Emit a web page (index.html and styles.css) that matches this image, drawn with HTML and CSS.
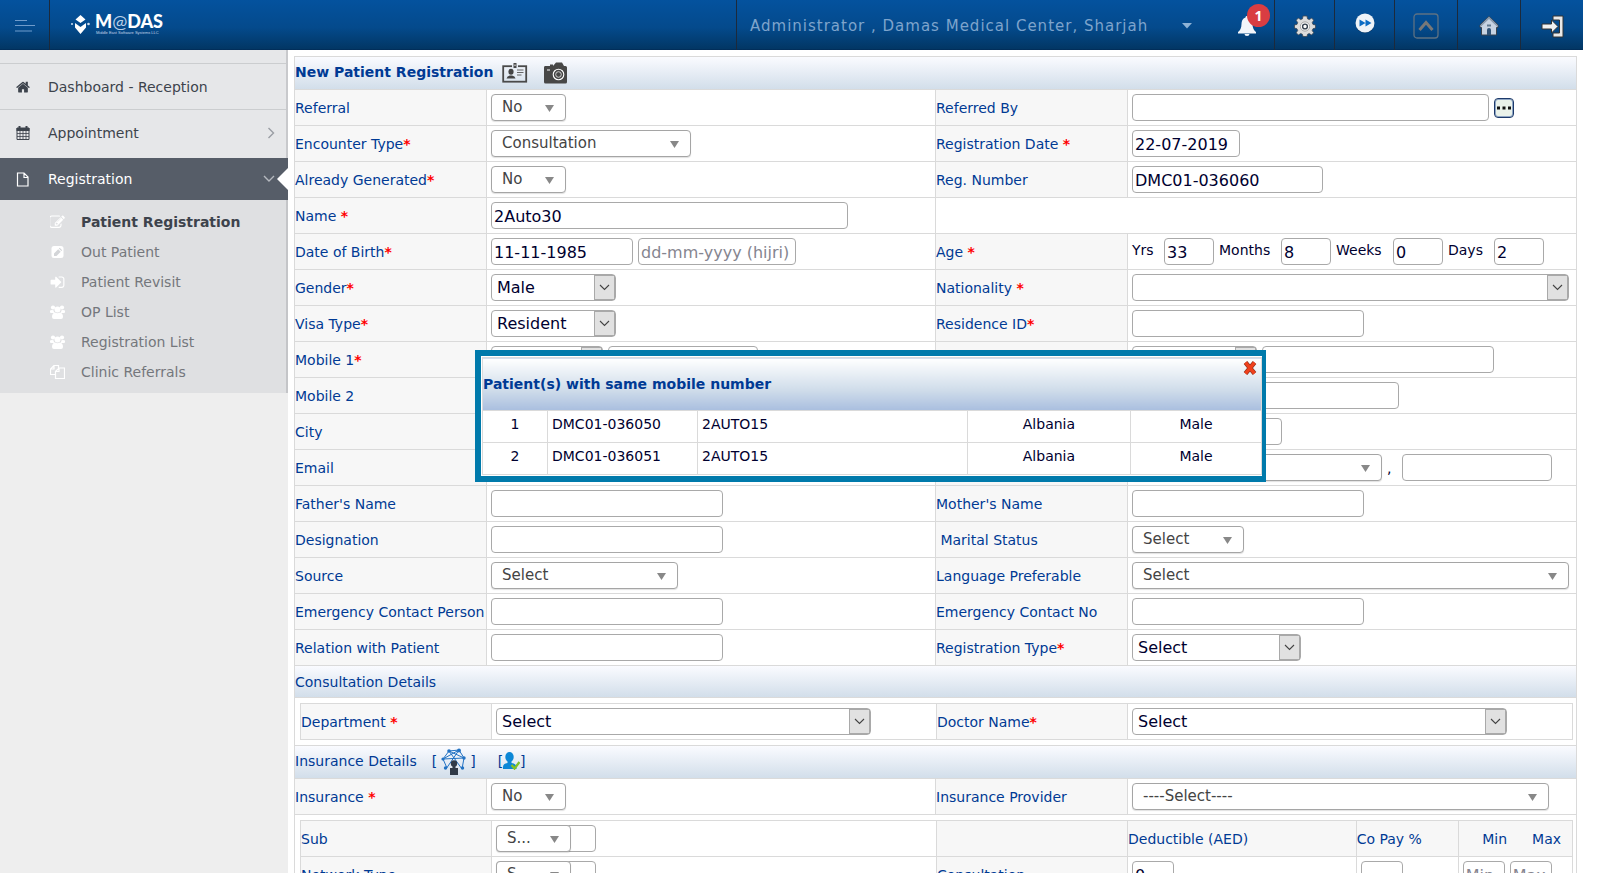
FILE: index.html
```html
<!DOCTYPE html>
<html lang="en">
<head>
<meta charset="utf-8">
<title>New Patient Registration</title>
<link rel="stylesheet" href="styles.css">
</head>
<body>
<div class="page">
  <header class="topbar">
    <button class="menu-toggle" type="button" aria-label="Toggle menu">
      <svg width="20" height="12" viewBox="0 0 20 12"><path d="M0 .5h12M0 5.500h20M0 11h17" stroke="#6f9bcb" stroke-width="1.200"/></svg>
    </button>
    <a class="brand" href="#">
      <svg width="100" height="36" viewBox="0 -6 100 36">
        <path d="M9.500 1l5 4.500-5 3.500-5-3.500z M4 9l5.500 4L15 9v4.500L9.500 20 4 13.500z" fill="#fff"/>
        <circle cx="1" cy="10" r="1" fill="#cfe0f2"/><circle cx="17.500" cy="10" r="1.300" fill="#cfe0f2"/>
        <text class="brand-name" x="24" y="14">M<tspan class="brand-e">@</tspan>DAS</text>
        <text class="brand-sub" x="25" y="20">Middle East Software Systems LLC</text>
      </svg>
    </a>
    <div class="user-area">
      <button class="user-button" type="button">Administrator , Damas Medical Center, Sharjah
        <svg width="10" height="6" viewBox="0 0 10 6"><path d="M0 0h10L5 5.500z" fill="#8fb3d6"/></svg>
      </button>
      <button class="bell" type="button" aria-label="Notifications">
        <svg width="18" height="20" viewBox="0 0 18 20"><path d="M9 0c1 0 1.500.6 1.500 1.400C13.500 2.200 14.500 5 14.500 8c0 4 1.500 6.500 3.500 8v1.500H0V16c2-1.500 3.500-4 3.500-8 0-3 1-5.800 4-6.600C7.500.6 8 0 9 0zM6.500 18h5a2.500 2 0 0 1-5 0z" fill="#f2f5fa"/></svg>
        <span class="badge">1</span>
      </button>
    </div>
    <nav class="tools">
      <a class="tool" href="#" aria-label="Settings">
        <svg width="22" height="22" viewBox="0 0 22 22"><g fill="#dcdcdc" stroke="#3c4652" stroke-width=".8"><path d="M9 1h4l.5 2.800 1.800.8L17.700 3l2 2.300-1.500 2.400.8 1.800 2.500.4v3.200l-2.500.6-.8 1.800 1.500 2.300-2.200 2.200-2.300-1.500-1.700.8L13 21.500H9l-.6-2.200-1.700-.8L4.400 20l-2.200-2.200 1.500-2.300-.8-1.800-2.400-.6V9.900l2.400-.4.800-1.800L2.200 5.300 4.300 3l2.400 1.600 1.800-.8z"/></g><circle cx="11" cy="11.500" r="4.600" fill="#fff" stroke="#a5a5a5"/><circle cx="11" cy="11.500" r="2.400" fill="#fff" stroke="#35404d" stroke-width="1.400"/></svg>
      </a>
      <a class="tool tool-raised" href="#" aria-label="Quick links">
        <svg width="20" height="20" viewBox="0 0 20 20"><circle cx="10" cy="10.500" r="9.500" fill="#022a55"/><circle cx="10" cy="10" r="9.500" fill="#eef3f8"/><path d="M4.500 6.500l6 3.500-6 3.500zM10.500 6.500l6 3.500-6 3.500z" fill="#0c6cc4"/></svg>
      </a>
      <a class="tool" href="#" aria-label="Collapse">
        <svg width="26" height="26" viewBox="0 0 26 26"><rect x="1" y="1" width="24" height="24" rx="3" fill="none" stroke="#5d7183" stroke-width="1.300"/><path d="M6.500 17L13 9.500l6.500 7.500" fill="none" stroke="#787878" stroke-width="3"/></svg>
      </a>
      <a class="tool" href="#" aria-label="Home">
        <svg width="20" height="20" viewBox="0 0 20 20"><path d="M10 .5l9 8.500v2.500h-1.500V19h-15v-7.500H1V9z" fill="#c7d3e2" stroke="#38424e" stroke-width="1"/><path d="M1.500 10L10 2l8.500 8" fill="none" stroke="#8798ab" stroke-width="1.500"/><path d="M8 19v-5a2 2 0 0 1 4 0v5z" fill="#2f5276"/><path d="M8 8.500h4v2H8z" fill="#60788f"/></svg>
      </a>
      <a class="tool" href="#" aria-label="Log out">
        <svg width="23" height="23" viewBox="0 0 23 23"><path d="M12 1h10v21H12v-4h6.500V5H12z" fill="#e9e9e9" stroke="#333" stroke-width="1"/><path d="M1 9h9.500V5l6.500 6.500-6.500 6.500v-4H1z" fill="#f1f1f1" stroke="#333" stroke-width="1"/></svg>
      </a>
    </nav>
  </header>

  <div class="body">
    <aside class="sidebar">
      <nav class="side-nav">
        <a class="side-item" href="#">
          <svg class="side-icon" width="14" height="14" viewBox="64 180 1664 1408"><path fill="#3d434c" d="M1472 992v480q0 26-19 45t-45 19h-384v-384h-256v384h-384q-26 0-45-19t-19-45v-480q0-1 .5-3t.5-3l575-474 575 474q1 2 1 6zm223-69l-62 74q-8 9-21 11h-3q-13 0-21-7l-692-577-692 577q-12 8-24 7-13-2-21-11l-62-74q-8-10-7-23.500t11-21.500l719-599q32-26 76-26t76 26l244 204v-195q0-14 9-23t23-9h192q14 0 23 9t9 23v408l219 182q10 8 11 21.500t-7 23.500z"/></svg>
          <span>Dashboard - Reception</span>
        </a>
        <a class="side-item" href="#">
          <svg class="side-icon" width="14" height="14" viewBox="0 0 14 14"><path d="M1 2h12v11.500H1z" fill="none" stroke="#3d434c"/><path d="M.5 2h13v3H.5z" fill="#3d434c"/><path d="M3.500 0v3.500M10.500 0v3.500" stroke="#3d434c" stroke-width="2"/><path d="M1 7.500h12M1 10.500h12M4 5v8.500M7 5v8.500M10 5v8.500" stroke="#3d434c" stroke-width=".8"/></svg>
          <span>Appointment</span>
          <svg class="side-arrow" width="8" height="12" viewBox="0 0 8 12"><path d="M1.500 1l5 5-5 5" fill="none" stroke="#9a9ea4" stroke-width="1.400"/></svg>
        </a>
        <a class="side-item side-item-active" href="#">
          <svg class="side-icon" width="14" height="15" viewBox="0 0 14 15"><path d="M1.500 1h6.500l4 4v9h-10.500zM8 1v4.500h4" fill="none" stroke="#fff" stroke-width="1.200"/></svg>
          <span>Registration</span>
          <svg class="side-arrow" width="12" height="8" viewBox="0 0 12 8"><path d="M1 1l5 5 5-5" fill="none" stroke="#b5b9bf" stroke-width="1.400"/></svg>
        </a>
      </nav>
      <nav class="sub-nav">
        <a class="sub-item sub-item-current" href="#">
          <svg width="15" height="14" viewBox="100 128 1700 1480"><path fill="#fff" d="M888 1184l116-116-152-152-116 116v56h96v96h56zm440-720q-16-16-33 1l-350 350q-17 17-1 33t33-1l350-350q17-17 1-33zm80 594v190q0 119-84.500 203.500t-203.500 84.500h-832q-119 0-203.500-84.500t-84.500-203.500v-832q0-119 84.500-203.500t203.500-84.500h832q63 0 117 25 15 7 18 23 3 17-9 29l-49 49q-14 14-32 8-23-6-45-6h-832q-66 0-113 47t-47 113v832q0 66 47 113t113 47h832q66 0 113-47t47-113v-126q0-13 9-22l64-64q15-15 35-7t20 29zm-96-738l288 288-672 672h-288v-288zm444 132l-92 92-288-288 92-92q28-28 68-28t68 28l152 152q28 28 28 68t-28 68z"/></svg>
          <span>Patient Registration</span></a>
        <a class="sub-item" href="#">
          <svg width="15" height="14" viewBox="0 0 15 14"><rect x="1.500" y="1" width="12" height="12" rx="2.500" fill="#fff"/><path d="M4 11V8.500L8.200 4.300l2.500 2.500L6.500 11zM8.900 3.600l.8-.8 2.500 2.500-.8.8z" fill="#d3d5d8"/></svg>
          <span>Out Patient</span></a>
        <a class="sub-item" href="#">
          <svg width="15" height="14" viewBox="64 160 1664 1440"><path fill="#fff" d="M1312 896q0 26-19 45l-544 544q-19 19-45 19t-45-19-19-45v-288h-448q-26 0-45-19t-19-45v-384q0-26 19-45t45-19h448v-288q0-26 19-45t45-19 45 19l544 544q19 19 19 45zm352-352v704q0 119-84.500 203.500t-203.500 84.500h-320q-13 0-22.500-9.500t-9.500-22.500q0-4-1-20t-.5-26.500 3-23.500 10-19.500 20.500-6.500h320q66 0 113-47t47-113v-704q0-66-47-113t-113-47h-312l-11.500-1-11.500-3-8-5.500-7-9-2-13.500q0-4-1-20t-.5-26.500 3-23.500 10-19.500 20.500-6.500h320q119 0 203.500 84.500t84.500 203.500z"/></svg>
          <span>Patient Revisit</span></a>
        <a class="sub-item" href="#">
          <svg width="15" height="14" viewBox="0 0 15 14"><g fill="#fff"><circle cx="3" cy="2.500" r="2.100"/><circle cx="12" cy="2.500" r="2.100"/><circle cx="7.500" cy="4.500" r="3"/><path d="M0 5.500q1.500-1 3.500-.3Q3.500 7 5 8H1Q0 8 0 7zM15 5.500q-1.500-1-3.500-.3Q11.500 7 10 8h4q1 0 1-1zM2 12q0-4 3-4.500 2.500 1.500 5 0 3 .5 3 4.500 0 2-2 2H4q-2 0-2-2z"/></g></svg>
          <span>OP List</span></a>
        <a class="sub-item" href="#">
          <svg width="15" height="14" viewBox="0 0 15 14"><g fill="#fff"><circle cx="3" cy="2.500" r="2.100"/><circle cx="12" cy="2.500" r="2.100"/><circle cx="7.500" cy="4.500" r="3"/><path d="M0 5.500q1.500-1 3.500-.3Q3.500 7 5 8H1Q0 8 0 7zM15 5.500q-1.500-1-3.500-.3Q11.500 7 10 8h4q1 0 1-1zM2 12q0-4 3-4.500 2.500 1.500 5 0 3 .5 3 4.500 0 2-2 2H4q-2 0-2-2z"/></g></svg>
          <span>Registration List</span></a>
        <a class="sub-item" href="#">
          <svg width="15" height="14" viewBox="0 0 15 14"><path d="M5.500 9.500h-5V4L4 .5h4.500V3M4 .5V4H.5M5.500 6.500L9 3h5.500v10.500h-9zM9 3v3.500H5.500" fill="none" stroke="#fff" stroke-width="1.200"/></svg>
          <span>Clinic Referrals</span></a>
      </nav>
    </aside>

    <main class="main">
      <form class="form">
        <div class="band">
          <h1 class="title">New Patient Registration</h1>
          <button class="icon-button" type="button" aria-label="Scan ID card">
            <svg width="26" height="20" viewBox="0 0 26 20"><rect x="1.200" y="3.200" width="23" height="15.500" fill="none" stroke="#4a4a4a" stroke-width="1.800"/><path d="M10 2h6v4h-6z" fill="#e3e9f1"/><path d="M11.500 0h3v5h-3z" fill="#4a4a4a"/><path d="M12.500 1.500h1v1.500h-1z" fill="#fff"/><ellipse cx="9" cy="8.800" rx="2.600" ry="3" fill="#444"/><path d="M4.500 15.500q.5-2.500 3.500-3h2q3 .5 3.500 3z" fill="#444"/><path d="M15 7h6.500M15 9.500h6.500M15 12h4.500" stroke="#666" stroke-width="1.100"/></svg>
          </button>
          <button class="icon-button icon-camera" type="button" aria-label="Take photo">
            <svg width="24" height="22" viewBox="0 0 24 22"><path d="M2 4h5V2.500h3V4l3-3.500h6L21 4h1.500q1.500 0 1.500 1.500V20q0 1.500-1.500 1.500h-20Q1 21.500 1 20V5.500Q1 4 2 4z" fill="#474747"/><circle cx="15.500" cy="12.500" r="5.300" fill="none" stroke="#fff" stroke-width="1.100"/><circle cx="15.500" cy="12.500" r="2.800" fill="none" stroke="#ddd" stroke-width=".9"/><path d="M4 8h3" stroke="#fff"/></svg>
          </button>
        </div>

        <div class="rows">
          <div class="lab"><label for="referral">Referral</label></div>
          <div class="val"><select id="referral" class="drop w75"><option>No</option></select></div>
          <div class="lab"><label for="refby">Referred By</label></div>
          <div class="val"><input id="refby" class="box w357"><button class="dots" type="button" aria-label="Browse"><svg width="14" height="4" viewBox="0 0 14 4"><path d="M0 .5h3v3H0zM5.500.5h3v3h-3zM11 .5h3v3h-3z" fill="#111"/></svg></button></div>

          <div class="lab"><label for="enc">Encounter Type<b class="req">*</b></label></div>
          <div class="val"><select id="enc" class="drop w200"><option>Consultation</option></select></div>
          <div class="lab"><label for="regdate">Registration Date <b class="req">*</b></label></div>
          <div class="val"><input id="regdate" class="box w108" value="22-07-2019"></div>

          <div class="lab"><label for="already">Already Generated<b class="req">*</b></label></div>
          <div class="val"><select id="already" class="drop w75"><option>No</option></select></div>
          <div class="lab"><label for="regno">Reg. Number</label></div>
          <div class="val"><input id="regno" class="box w191" value="DMC01-036060"></div>

          <div class="lab"><label for="name">Name <b class="req">*</b></label></div>
          <div class="val"><input id="name" class="box w357" value="2Auto30"></div>
          <div class="val wide"></div>

          <div class="lab"><label for="dob">Date of Birth<b class="req">*</b></label></div>
          <div class="val"><input id="dob" class="box w142" value="11-11-1985"><input class="box w158" placeholder="dd-mm-yyyy (hijri)" aria-label="Date of birth (hijri)"></div>
          <div class="lab"><span>Age <b class="req">*</b></span></div>
          <div class="val age">
            <label class="age-part age-y"><span>Yrs</span><input class="box w50" value="33"></label>
            <label class="age-part age-m"><span>Months</span><input class="box w50" value="8"></label>
            <label class="age-part age-w"><span>Weeks</span><input class="box w50" value="0"></label>
            <label class="age-part age-d"><span>Days</span><input class="box w50" value="2"></label>
          </div>

          <div class="lab"><label for="gender">Gender<b class="req">*</b></label></div>
          <div class="val"><select id="gender" class="pick w125"><option>Male</option></select></div>
          <div class="lab"><label for="nation">Nationality <b class="req">*</b></label></div>
          <div class="val"><select id="nation" class="pick w437"><option></option></select></div>

          <div class="lab"><label for="visa">Visa Type<b class="req">*</b></label></div>
          <div class="val"><select id="visa" class="pick w125"><option>Resident</option></select></div>
          <div class="lab"><label for="resid">Residence ID<b class="req">*</b></label></div>
          <div class="val"><input id="resid" class="box w232"></div>

          <div class="lab"><label for="mob1">Mobile 1<b class="req">*</b></label></div>
          <div class="val"><select class="pick w112" aria-label="Mobile 1 code"><option></option></select><input id="mob1" class="box w150"></div>
          <div class="lab"></div>
          <div class="val"><select class="pick w125" aria-label="ID type"><option></option></select><input class="box w232" aria-label="ID number"></div>

          <div class="lab"><label for="mob2">Mobile 2</label></div>
          <div class="val"><input id="mob2" class="box w232"></div>
          <div class="lab"></div>
          <div class="val"><select class="pick w112" aria-label="Phone code"><option></option></select><input class="box w150" aria-label="Phone"></div>

          <div class="lab"><label for="city">City</label></div>
          <div class="val"><input id="city" class="box w232"></div>
          <div class="lab"></div>
          <div class="val"><input class="box w150" aria-label="P.O. Box"></div>

          <div class="lab"><label for="email">Email</label></div>
          <div class="val"><input id="email" class="box w232"></div>
          <div class="lab"></div>
          <div class="val"><select class="drop w250" aria-label="Religion"><option></option></select><span class="comma">,</span><input class="box w150" aria-label="Other"></div>

          <div class="lab"><label for="father">Father's Name</label></div>
          <div class="val"><input id="father" class="box w232"></div>
          <div class="lab"><label for="mother">Mother's Name</label></div>
          <div class="val"><input id="mother" class="box w232"></div>

          <div class="lab"><label for="desig">Designation</label></div>
          <div class="val"><input id="desig" class="box w232"></div>
          <div class="lab"><label for="marital">&nbsp;Marital Status</label></div>
          <div class="val"><select id="marital" class="drop w112"><option>Select</option></select></div>

          <div class="lab"><label for="source">Source</label></div>
          <div class="val"><select id="source" class="drop w187"><option>Select</option></select></div>
          <div class="lab"><label for="lang">Language Preferable</label></div>
          <div class="val"><select id="lang" class="drop w437"><option>Select</option></select></div>

          <div class="lab"><label for="ecp">Emergency Contact Person</label></div>
          <div class="val"><input id="ecp" class="box w232"></div>
          <div class="lab"><label for="ecn">Emergency Contact No</label></div>
          <div class="val"><input id="ecn" class="box w232"></div>

          <div class="lab"><label for="rel">Relation with Patient</label></div>
          <div class="val"><input id="rel" class="box w232"></div>
          <div class="lab"><label for="regtype">Registration Type<b class="req">*</b></label></div>
          <div class="val"><select id="regtype" class="pick w169"><option>Select</option></select></div>
        </div>

        <div class="band band-short"><h2 class="section">Consultation Details</h2></div>
        <div class="nested">
          <div class="rows rows-nested">
            <div class="lab"><label for="dept">Department <b class="req">*</b></label></div>
            <div class="val"><select id="dept" class="pick w375"><option>Select</option></select></div>
            <div class="lab"><label for="doctor">Doctor Name<b class="req">*</b></label></div>
            <div class="val"><select id="doctor" class="pick w375"><option>Select</option></select></div>
          </div>
        </div>

        <div class="band band-insurance"><h2 class="section">Insurance Details</h2>
          <span class="bracket bracket-net">[
            <button class="icon-button" type="button" aria-label="Insurance network">
              <svg width="25" height="27" viewBox="0 0 25 27"><path d="M2 11L8 3l10-1 5 8-2 11M2 11l21-1M8 3l15 7M18 2L2 11l4 9M8 3l13 18M18 2L5 21" fill="none" stroke="#2272c3" stroke-width="1"/><g fill="#2272c3"><circle cx="2" cy="11" r="1.600"/><circle cx="8" cy="3" r="1.800"/><circle cx="18" cy="2.500" r="1.900"/><circle cx="23" cy="10" r="1.700"/><circle cx="21.500" cy="20" r="1.700"/><circle cx="4.500" cy="20" r="1.700"/></g><circle cx="13" cy="15.500" r="3.200" fill="#303a48"/><path d="M11.500 17h3v3h2.500v7H9v-7h2.500z" fill="#303a48"/></svg>
            </button>
            ]</span>
          <span class="bracket">[<button class="icon-button" type="button" aria-label="Verify member">
              <svg width="17" height="18" viewBox="0 0 17 18"><ellipse cx="6.500" cy="5" rx="4.200" ry="5" fill="#0b87d6"/><path d="M4.500 8h4v3q5 .5 5 4.500V17H0v-2q0-3.500 4.500-4z" fill="#0b87d6"/><path d="M8.500 13l3 3.500 5-6.500" fill="none" stroke="#84c225" stroke-width="2.400"/></svg>
            </button>]</span>
        </div>
        <div class="rows">
          <div class="lab"><label for="ins">Insurance <b class="req">*</b></label></div>
          <div class="val"><select id="ins" class="drop w75"><option>No</option></select></div>
          <div class="lab"><label for="prov">Insurance Provider</label></div>
          <div class="val"><select id="prov" class="drop w417"><option>----Select----</option></select></div>
        </div>
        <div class="nested">
          <div class="rows rows-nested rows-cover">
            <div class="lab"><label for="sub">Sub</label></div>
            <div class="val"><span class="combo"><select id="sub" class="drop w75"><option>S...</option></select></span></div>
            <div class="lab"></div>
            <div class="lab">Deductible (AED)</div>
            <div class="lab">Co Pay %</div>
            <div class="lab minmax"><span>Min</span><span>Max</span></div>

            <div class="lab"><label for="net">Network Type</label></div>
            <div class="val"><span class="combo"><select id="net" class="drop w75"><option>S...</option></select></span></div>
            <div class="lab"><label for="ded">Consultation</label></div>
            <div class="val"><input id="ded" class="box w42" value="0"></div>
            <div class="val"><input class="box w42" aria-label="Co pay"></div>
            <div class="val"><input class="box w42" placeholder="Min" aria-label="Min"><input class="box w42" placeholder="Max" aria-label="Max"></div>
          </div>
        </div>
      </form>

      <div class="popup" role="dialog" aria-label="Patient(s) with same mobile number">
        <button class="popup-close" type="button" aria-label="Close"><svg width="14" height="14" viewBox="0 0 14 14"><path d="M2.500 1.500l9 11M11.500 1.500l-9 11" stroke="#8d3420" stroke-width="4.600"/><path d="M2.500 1.500l9 11M11.500 1.500l-9 11" stroke="#f0401c" stroke-width="3.400"/></svg></button>
        <table class="matches">
          <colgroup><col class="c-no"><col class="c-id"><col><col class="c-nation"><col class="c-sex"></colgroup>
          <thead><tr><th colspan="5">Patient(s) with same mobile number</th></tr></thead>
          <tbody>
            <tr><td class="mid">1</td><td>DMC01-036050</td><td>2AUTO15</td><td class="mid">Albania</td><td class="mid">Male</td></tr>
            <tr><td class="mid">2</td><td>DMC01-036051</td><td>2AUTO15</td><td class="mid">Albania</td><td class="mid">Male</td></tr>
          </tbody>
        </table>
      </div>
    </main>
  </div>
</div>
</body>
</html>
```
FILE: styles.css
```css
* { box-sizing: border-box; }

body {
  margin: 0;
  background: #fff;
  color: #00002f;
  font: 14px/18px Verdana, "DejaVu Sans", sans-serif;
}

button {
  padding: 0;
  border: 0;
  background: none;
  color: inherit;
  font: inherit;
}

a { color: inherit; text-decoration: none; }
svg { display: block; flex: none; }

.page {
  display: flex;
  flex-direction: column;
  height: 100vh;
  padding-right: 20px;
  overflow: hidden;
}

/* Top bar */
.topbar {
  display: flex;
  flex: none;
  height: 50px;
  background: linear-gradient(#04529e, #044a8c 55%, #023765 97%, #012a55);
}

.menu-toggle {
  display: flex;
  align-items: center;
  width: 50px;
  padding: 2px 0 0 15px;
  border-right: 1px solid #1c2a3c;
}

.brand { display: flex; align-items: center; padding: 2px 0 0 21px; }
.brand-name { fill: #fff; font: 900 18px Lato, sans-serif; }
.brand-e { fill: #b9cfe6; font-weight: 400; }
.brand-sub { fill: #c3d5e8; font: 4px "Liberation Sans", sans-serif; }

.user-area {
  display: flex;
  justify-content: space-between;
  align-items: center;
  width: 538px;
  margin-left: auto;
  padding: 2px 18px 0 13px;
  border-left: 1px solid #1c2a3c;
}

.user-button {
  display: flex;
  align-items: center;
  gap: 34px;
  color: #7ea4cc;
  font-size: 15px;
  letter-spacing: 1px;
}

.bell { position: relative; }

.badge {
  position: absolute;
  left: 9px;
  top: -12px;
  width: 23px;
  height: 23px;
  border-radius: 50%;
  background: #d93d42;
  color: #fff;
  font: bold 14px/23px "Open Sans", sans-serif;
  text-align: center;
}

.tools { display: flex; }

.tool {
  display: flex;
  align-items: center;
  justify-content: center;
  width: 63px;
  padding-top: 2px;
  border-left: 1px solid #1c2a3c;
}

.tool:nth-child(-n+2) { width: 60px; }
.tool-raised { padding: 0 0 4px; }

/* Sidebar */
.body { display: flex; flex: 1; min-height: 0; }

.sidebar {
  flex: none;
  width: 288px;
  background: #eee;
}

.side-nav {
  padding-top: 13px;
  border-right: 2px solid #c8c9cc;
  background: #e6e7e9;
}

.side-item {
  display: flex;
  align-items: center;
  height: 46px;
  padding: 0 11px 0 16px;
  border-top: 1px solid #cbcdcf;
  color: #3d434c;
}

.side-icon { margin-right: 18px; }
.side-arrow { margin-left: auto; }

.side-item-active {
  position: relative;
  height: 42px;
  margin: 3px -2px 0 0;
  padding-right: 13px;
  border-top: 0;
  background: #565d68;
  color: #fff;
}

.side-item-active::after {
  content: "";
  position: absolute;
  right: 0;
  top: 10px;
  border: 11px solid transparent;
  border-left: 0;
  border-right-color: #fff;
}

.sub-nav {
  padding: 7px 0 6px;
  border-right: 2px solid #c4c5c8;
  background: #dfe0e2;
}

.sub-item {
  display: flex;
  align-items: center;
  gap: 16px;
  height: 30px;
  padding-left: 50px;
  color: #74777c;
}

.sub-item-current { color: #3d434c; font-weight: bold; }

/* Registration form */
.main {
  position: relative;
  flex: 1;
  min-width: 0;
  padding: 6px 6px 0;
}

.form {
  border: 1px solid #dadada;
  color: #003a94;
}

.band {
  display: flex;
  align-items: center;
  height: 33px;
  border-bottom: 1px solid #dadada;
  background: linear-gradient(#fafbff, #d2deea);
}

.band-short { height: 32px; }
.band-insurance { padding-bottom: 2px; }
.title { margin: 0 9px 2px 0; font-size: 14px; line-height: 18px; }
.section { margin: 0; font-size: 14px; font-weight: normal; line-height: 18px; }
.icon-camera { margin-left: 15px; }
.bracket { display: flex; align-items: center; margin-left: 22px; }
.bracket-net { gap: 4px; margin-left: 15px; }

.rows {
  display: grid;
  grid-template-columns: 192px 1fr 192px 1fr;
  grid-auto-rows: 36px;
  margin-right: -1px;
}

.lab,
.val {
  display: flex;
  align-items: center;
  border: solid #dadada;
  border-width: 0 1px 1px 0;
}

.lab { background: #f7f7f7; white-space: nowrap; }
.val { gap: 5px; padding: 0 4px; min-width: 0; background: #fff; }
.wide { grid-column: span 2; }
.req { color: #f00; }

.nested {
  padding: 5px 3px 5px 5px;
  border-bottom: 1px solid #dadada;
}

.rows-nested {
  grid-template-columns: 191px 1fr 191px 1fr;
  margin: 0;
  border: solid #dadada;
  border-width: 1px 0 0 1px;
}

.rows-cover { grid-template-columns: 191px 445px 191px 2fr 102px 1fr; }

/* Controls */
.box,
.drop,
.pick {
  height: 27px;
  margin: 0;
  border: 1px solid #a9a9a9;
  border-radius: 4px;
  background: #fff;
  color: #00002f;
  font: 16px/20px Verdana, "DejaVu Sans", sans-serif;
}

.box { min-width: 0; padding: 2px 2px 0; }
.box::placeholder { color: #85858f; }

.drop,
.pick { appearance: none; }

.drop {
  padding: 0 20px 2px 10px;
  border-color: #a5a5a5;
  background: #fff url("data:image/svg+xml,%3Csvg xmlns='http://www.w3.org/2000/svg' width='9' height='7'%3E%3Cpath d='M0 0h9L4.500 7z' fill='%23888'/%3E%3C/svg%3E") no-repeat right 11px top 10px;
  box-shadow: 0 1px 1px rgba(0, 0, 0, .12);
  color: #444;
  font-size: 15px;
}

.pick {
  padding: 1px 24px 0 5px;
  background:
    url("data:image/svg+xml,%3Csvg xmlns='http://www.w3.org/2000/svg' width='21' height='25'%3E%3Crect x='.5' y='.5' width='20' height='24' fill='%23e1e1e1' stroke='%23a9a9a9'/%3E%3Cpath d='M6 10l4.500 4.500L15 10' fill='none' stroke='%23444' stroke-width='1.100'/%3E%3C/svg%3E") no-repeat right top,
    #fff;
}

.w42 { width: 42px; }
.w50 { width: 50px; }
.w75 { width: 75px; }
.w108 { width: 108px; }
.w112 { width: 112px; }
.w125 { width: 125px; }
.w142 { width: 142px; }
.w150 { width: 150px; }
.w158 { width: 158px; }
.w169 { width: 169px; }
.w187 { width: 187px; }
.w191 { width: 191px; }
.w200 { width: 200px; }
.w232 { width: 232px; }
.w250 { width: 250px; }
.w357 { width: 357px; }
.w375 { width: 375px; }
.w417 { width: 417px; }
.w437 { width: 437px; }

.dots {
  display: flex;
  align-items: center;
  justify-content: center;
  width: 20px;
  height: 20px;
  border: 1px solid #1d3a6b;
  border-radius: 4px;
  background: #eaf2ea;
  box-shadow: inset 0 0 0 1px #8fa6c4;
}

.comma { width: 10px; color: #00002f; }

.age { color: #00002f; }
.age-part { display: flex; justify-content: space-between; align-items: center; }
.age-part span { padding-bottom: 3px; }
.age-y { width: 82px; }
.age-m { width: 112px; }
.age-w { width: 107px; }
.age-d { width: 96px; }

.combo {
  width: 100px;
  height: 27px;
  border: 1px solid #a9a9a9;
  border-radius: 4px;
}

.combo .drop { display: block; margin: -1px; }

.minmax { justify-content: flex-end; gap: 25px; padding-right: 11px; }

/* Duplicate mobile number popup */
.popup {
  position: absolute;
  left: 187px;
  top: 300px;
  width: 791px;
  padding: 1px 0 1px 1px;
  border: 6px solid #007aab;
  border-right-width: 4px;
  background: #fff;
}

.popup-close { position: absolute; right: 5px; top: 5px; }

.matches {
  width: 100%;
  border-collapse: collapse;
  table-layout: fixed;
}

.matches th {
  height: 53px;
  padding: 0;
  border: 1px solid #dadada;
  background: linear-gradient(#fff, #d0ddea 60%, #a9bedf);
  color: #003a94;
  text-align: left;
}

.matches td {
  height: 32px;
  padding: 0 4px 5px;
  border: 1px solid #dadada;
}

.matches .mid { text-align: center; }
.c-no { width: 65px; }
.c-id { width: 150px; }
.c-nation { width: 163px; }
.c-sex { width: 131px; }
```
